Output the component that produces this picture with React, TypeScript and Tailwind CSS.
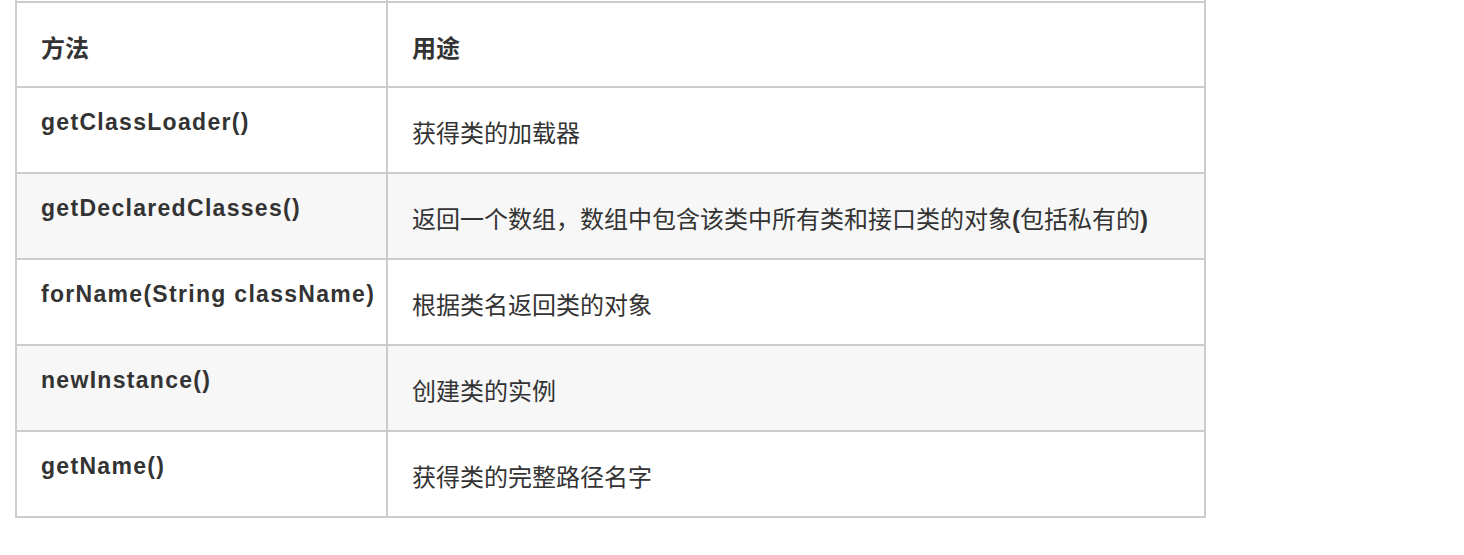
import React from "react";

const font = { fontFamily: '"Liberation Sans", "Noto Sans CJK SC", sans-serif' };

type Row = { m: string; d: React.ReactNode; alt: boolean };

const rows: Row[] = [
  { m: "getClassLoader()", d: "获得类的加载器", alt: false },
  {
    m: "getDeclaredClasses()",
    d: (
      <>
        返回一个数组，数组中包含该类中所有类和接口类的对象<b className="font-bold">(</b>包括私有的<b className="font-bold">)</b>
      </>
    ),
    alt: true,
  },
  { m: "forName(String className)", d: "根据类名返回类的对象", alt: false },
  { m: "newInstance()", d: "创建类的实例", alt: true },
  { m: "getName()", d: "获得类的完整路径名字", alt: false },
];

export default function App() {
  return (
    <div className="w-[1464px] h-[555px] bg-white text-[#333]" style={font}>
      <div className="ml-[15px] w-[1191px]">
        <div className="flex h-px border-x-2 border-[#cccccc]">
          <div className="w-[371px] border-r-2 border-[#cccccc]" />
          <div className="flex-1" />
        </div>
        <div className="flex h-[87px] border-x-2 border-t-2 border-b-2 border-[#cccccc] bg-white">
          <div className="w-[371px] border-r-2 border-[#cccccc] pl-[24px] pt-[34px] text-[24px] leading-[24px] font-bold">
            方法
          </div>
          <div className="flex-1 pl-[24px] pt-[34px] text-[24px] leading-[24px] font-bold">用途</div>
        </div>
        {rows.map((r, i) => (
          <div
            key={i}
            className={`flex h-[86px] border-x-2 border-b-2 border-[#cccccc] ${r.alt ? "bg-[#f7f7f7]" : "bg-white"}`}
          >
            <div className="w-[371px] border-r-2 border-[#cccccc] pl-[24px] pt-[22px] text-[23px] leading-[24px] font-bold tracking-[1.3px] whitespace-nowrap">
              {r.m}
            </div>
            <div className="flex-1 pl-[24px] pt-[34px] text-[24px] leading-[24px] whitespace-nowrap">{r.d}</div>
          </div>
        ))}
      </div>
    </div>
  );
}
